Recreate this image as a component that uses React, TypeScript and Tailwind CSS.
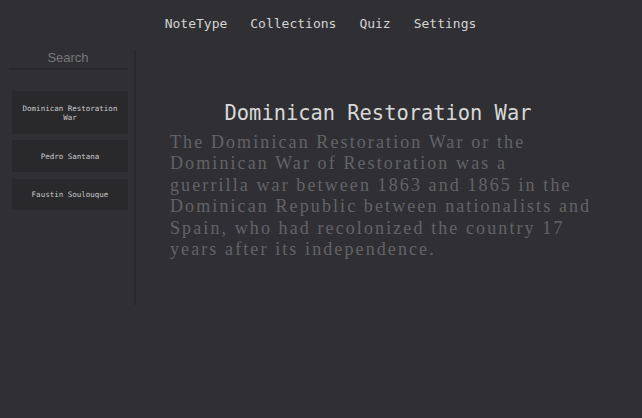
import { memo } from 'react';

const navItems = ['NoteType', 'Collections', 'Quiz', 'Settings'];
const notes = [
  { id: 1, title: 'Dominican Restoration War', pad: 'pt-[13px] pb-[12px]' },
  { id: 2, title: 'Pedro Santana', pad: 'pt-[12px] pb-[11px]' },
  { id: 3, title: 'Faustin Soulouque', pad: 'py-[11px]' },
];

const mono = { fontFamily: '"DejaVu Sans Mono", monospace' };

const App = memo(() => {
  return (
    <div className="w-[642px] h-[418px] bg-[#303034] overflow-hidden flex flex-col">
      {/* Top nav */}
      <nav className="h-[46px] flex items-center justify-center gap-[23px] pr-[1px] pt-[1px]">
        {navItems.map((item) => (
          <span key={item} className="text-[13px] text-[#d4d4d4]" style={mono}>
            {item}
          </span>
        ))}
      </nav>

      <div className="flex">
        {/* Sidebar */}
        <aside className="w-[134px] h-[255px] mt-[4px] flex flex-col">
          <div className="ml-[9px] mr-[6px] -mt-[2px] h-[22px] border-b-2 border-[#29292c] flex items-center justify-center">
            <span className="text-[13px] text-[#77777a] font-['Liberation_Sans',sans-serif] pr-[1px]">Search</span>
          </div>
          <div className="flex flex-col gap-[6px] ml-[12px] mr-[6px] mt-[21px]">
            {notes.map((note, i) => (
              <div
                key={note.id}
                className={`bg-[#29292c] text-center text-[7.5px] leading-[9px] text-[#c9c9c9] px-[6px] ${note.pad} ${i === 2 ? 'mt-[1px]' : ''}`}
                style={mono}
              >
                {note.title}
              </div>
            ))}
          </div>
        </aside>
        <div className="w-[2px] h-[255px] mt-[4px] bg-[#29292c]" />

        {/* Main content */}
        <main className="flex-1 pl-[34px] pt-[54px]">
          <div className="w-[422px]">
            <h1 className="text-center text-[20.4px] leading-[26px] text-[#d8d8d8] pr-[6px]" style={mono}>
              Dominican Restoration War
            </h1>
            <p className="text-[18px] leading-[21.4px] tracking-[2.1px] text-[#636367] font-['Liberation_Serif',serif] mt-[6px]">
              The Dominican Restoration War or the Dominican War of Restoration was a guerrilla war between 1863 and 1865 in the Dominican Republic between nationalists and Spain, who had recolonized the country 17 years after its independence.
            </p>
          </div>
        </main>
      </div>
    </div>
  );
});

App.displayName = 'App';

export default App;
